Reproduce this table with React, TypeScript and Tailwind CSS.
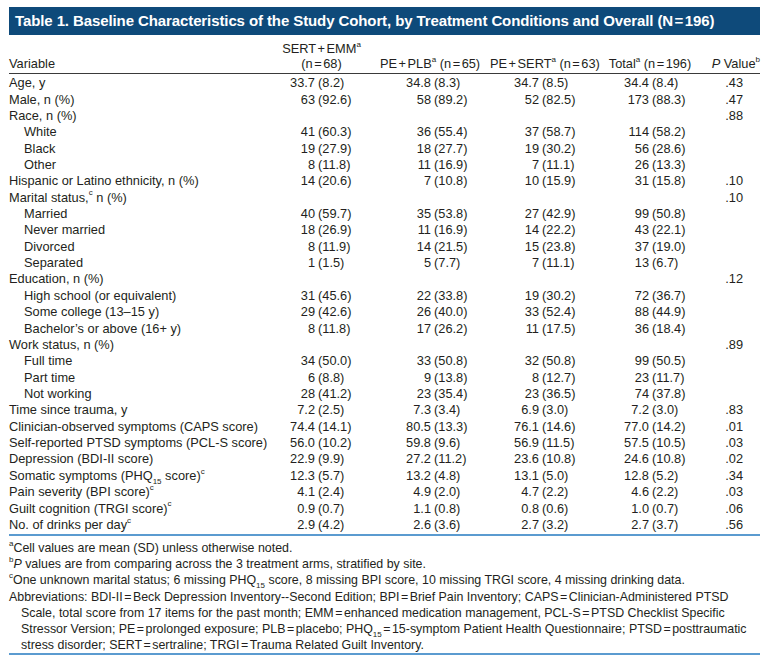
import type { ReactNode } from "react";

type Cell = [string, string];
type Row = { label: ReactNode; indent?: boolean; v?: Cell[]; p?: string };

const sup = (s: string) => <sup className="relative -top-[1px] text-[8px] align-super leading-none">{s}</sup>;
const sub15 = <sub className="text-[8px] leading-none align-[-2px]">15</sub>;
const eq = <span className="mx-[1.5px]">=</span>;
const plus = <span className="mx-[1.5px]">+</span>;

const rows: Row[] = [
  { label: "Age, y", v: [["33.7", "(8.2)"], ["34.8", "(8.3)"], ["34.7", "(8.5)"], ["34.4", "(8.4)"]], p: ".43" },
  { label: "Male, n (%)", v: [["63", "(92.6)"], ["58", "(89.2)"], ["52", "(82.5)"], ["173", "(88.3)"]], p: ".47" },
  { label: "Race, n (%)", p: ".88" },
  { label: "White", indent: true, v: [["41", "(60.3)"], ["36", "(55.4)"], ["37", "(58.7)"], ["114", "(58.2)"]] },
  { label: "Black", indent: true, v: [["19", "(27.9)"], ["18", "(27.7)"], ["19", "(30.2)"], ["56", "(28.6)"]] },
  { label: "Other", indent: true, v: [["8", "(11.8)"], ["11", "(16.9)"], ["7", "(11.1)"], ["26", "(13.3)"]] },
  { label: "Hispanic or Latino ethnicity, n (%)", v: [["14", "(20.6)"], ["7", "(10.8)"], ["10", "(15.9)"], ["31", "(15.8)"]], p: ".10" },
  { label: <>Marital status,{sup("c")} n (%)</>, p: ".10" },
  { label: "Married", indent: true, v: [["40", "(59.7)"], ["35", "(53.8)"], ["27", "(42.9)"], ["99", "(50.8)"]] },
  { label: "Never married", indent: true, v: [["18", "(26.9)"], ["11", "(16.9)"], ["14", "(22.2)"], ["43", "(22.1)"]] },
  { label: "Divorced", indent: true, v: [["8", "(11.9)"], ["14", "(21.5)"], ["15", "(23.8)"], ["37", "(19.0)"]] },
  { label: "Separated", indent: true, v: [["1", "(1.5)"], ["5", "(7.7)"], ["7", "(11.1)"], ["13", "(6.7)"]] },
  { label: "Education, n (%)", p: ".12" },
  { label: "High school (or equivalent)", indent: true, v: [["31", "(45.6)"], ["22", "(33.8)"], ["19", "(30.2)"], ["72", "(36.7)"]] },
  { label: "Some college (13–15 y)", indent: true, v: [["29", "(42.6)"], ["26", "(40.0)"], ["33", "(52.4)"], ["88", "(44.9)"]] },
  { label: "Bachelor’s or above (16+ y)", indent: true, v: [["8", "(11.8)"], ["17", "(26.2)"], ["11", "(17.5)"], ["36", "(18.4)"]] },
  { label: "Work status, n (%)", p: ".89" },
  { label: "Full time", indent: true, v: [["34", "(50.0)"], ["33", "(50.8)"], ["32", "(50.8)"], ["99", "(50.5)"]] },
  { label: "Part time", indent: true, v: [["6", "(8.8)"], ["9", "(13.8)"], ["8", "(12.7)"], ["23", "(11.7)"]] },
  { label: "Not working", indent: true, v: [["28", "(41.2)"], ["23", "(35.4)"], ["23", "(36.5)"], ["74", "(37.8)"]] },
  { label: "Time since trauma, y", v: [["7.2", "(2.5)"], ["7.3", "(3.4)"], ["6.9", "(3.0)"], ["7.2", "(3.0)"]], p: ".83" },
  { label: "Clinician-observed symptoms (CAPS score)", v: [["74.4", "(14.1)"], ["80.5", "(13.3)"], ["76.1", "(14.6)"], ["77.0", "(14.2)"]], p: ".01" },
  { label: "Self-reported PTSD symptoms (PCL-S score)", v: [["56.0", "(10.2)"], ["59.8", "(9.6)"], ["56.9", "(11.5)"], ["57.5", "(10.5)"]], p: ".03" },
  { label: "Depression (BDI-II score)", v: [["22.9", "(9.9)"], ["27.2", "(11.2)"], ["23.6", "(10.8)"], ["24.6", "(10.8)"]], p: ".02" },
  { label: <>Somatic symptoms (PHQ{sub15} score){sup("c")}</>, v: [["12.3", "(5.7)"], ["13.2", "(4.8)"], ["13.1", "(5.0)"], ["12.8", "(5.2)"]], p: ".34" },
  { label: <>Pain severity (BPI score){sup("c")}</>, v: [["4.1", "(2.4)"], ["4.9", "(2.0)"], ["4.7", "(2.2)"], ["4.6", "(2.2)"]], p: ".03" },
  { label: <>Guilt cognition (TRGI score){sup("c")}</>, v: [["0.9", "(0.7)"], ["1.1", "(0.8)"], ["0.8", "(0.6)"], ["1.0", "(0.7)"]], p: ".06" },
  { label: <>No. of drinks per day{sup("c")}</>, v: [["2.9", "(4.2)"], ["2.6", "(3.6)"], ["2.7", "(3.2)"], ["2.7", "(3.7)"]], p: ".56" },
];

const gridCols = "grid grid-cols-[256px_50px_65px_51px_59px_49px_61px_49px_51px_43px_17px]";

function DataRow({ row }: { row: Row }) {
  return (
    <div className={`${gridCols} h-[16.37px] items-center leading-[16px]`}>
      <div className={`whitespace-nowrap ${row.indent ? "pl-[15px]" : ""}`}>{row.label}</div>
      {[0, 1, 2, 3].map((i) => (
        <div key={i} className="contents">
          <div className="text-right tabular-nums">{row.v?.[i][0]}</div>
          <div className="pl-[3px] text-left tabular-nums whitespace-nowrap">{row.v?.[i][1]}</div>
        </div>
      ))}
      <div className="text-right tabular-nums">{row.p}</div>
      <div />
    </div>
  );
}

export default function App() {
  return (
    <div className="min-h-[663px] w-[768px] bg-white pl-[9px] pt-[7px] text-[12.8px] text-[#231f20] [font-family:'Liberation_Sans',Arial,sans-serif]">
      <div className="w-[751px]">
        <div className="flex h-[28px] items-center bg-[#0e4a7a] pl-[6px] text-[15px] font-bold tracking-[-0.1px] text-white whitespace-nowrap">
          Table 1. Baseline Characteristics of the Study Cohort, by Treatment Conditions and Overall (N{eq}196)
        </div>

        <div className={`${gridCols} h-[39px] items-end border-b border-[#3a3a3a] pb-[2px] leading-[15px]`}>
          <div>Variable</div>
          <div className="col-span-2 flex flex-col items-center pr-[2px]">
            <span>SERT{plus}EMM{sup("a")}</span>
            <span>(n{eq}68)</span>
          </div>
          <div className="col-span-2 whitespace-nowrap text-center pr-[30px]">
            PE{plus}PLB{sup("a")} (n{eq}65)
          </div>
          <div className="col-span-2 whitespace-nowrap text-center pr-[6px]">
            PE{plus}SERT{sup("a")} (n{eq}63)
          </div>
          <div className="col-span-2 whitespace-nowrap text-center pr-[0px]">
            Total{sup("a")} (n{eq}196)
          </div>
          <div className="col-span-2 whitespace-nowrap text-right">
            <i>P</i> Value{sup("b")}
          </div>
        </div>

        <div className="pt-[1px]">
          {rows.map((r, i) => (
            <DataRow key={i} row={r} />
          ))}
        </div>

        <div className="mt-[1px] h-[2px] bg-[#5b9bd0]" />

        <div className="pt-[4px] text-[12.4px] leading-[16.2px]">
          <div>{sup("a")}Cell values are mean (SD) unless otherwise noted.</div>
          <div>
            {sup("b")}
            <i>P</i> values are from comparing across the 3 treatment arms, stratified by site.
          </div>
          <div>
            {sup("c")}One unknown marital status; 6 missing PHQ{sub15} score, 8 missing BPI score, 10 missing TRGI score, 4 missing drinking data.
          </div>
          <div className="whitespace-nowrap">
            Abbreviations: BDI-II{eq}Beck Depression Inventory--Second Edition; BPI{eq}Brief Pain Inventory; CAPS{eq}Clinician-Administered PTSD
          </div>
          <div className="whitespace-nowrap pl-[12px]">
            Scale, total score from 17 items for the past month; EMM{eq}enhanced medication management, PCL-S{eq}PTSD Checklist Specific
          </div>
          <div className="whitespace-nowrap pl-[12px]">
            Stressor Version; PE{eq}prolonged exposure; PLB{eq}placebo; PHQ{sub15}{eq}15-symptom Patient Health Questionnaire; PTSD{eq}posttraumatic
          </div>
          <div className="whitespace-nowrap pl-[12px]">
            stress disorder; SERT{eq}sertraline; TRGI{eq}Trauma Related Guilt Inventory.
          </div>
        </div>

        <div className="h-[2px] bg-[#5b9bd0]" />
      </div>
    </div>
  );
}
